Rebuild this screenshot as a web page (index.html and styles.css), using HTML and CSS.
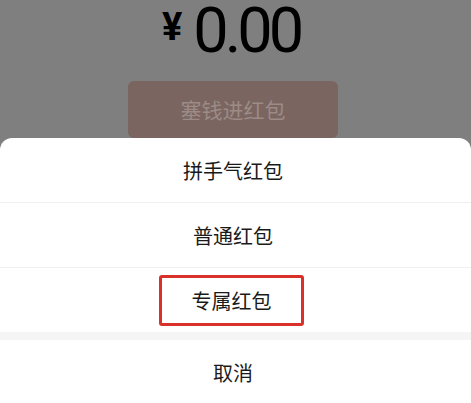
FILE: index.html
```html
<!DOCTYPE html>
<html lang="zh">
<head>
  <meta charset="UTF-8" />
  <title>发红包</title>
  <link rel="stylesheet" href="styles.css">
</head>
<body>

<div class="top">
  <div class="amount">
    <span class="yen">¥</span>
    <span class="num">0.00</span>
  </div>
  <div class="send-btn">塞钱进红包</div>
</div>

<div class="sheet">
  <div class="row">拼手气红包</div>
  <div class="row">普通红包</div>
  <div class="row"><span class="marked">专属红包</span></div>
  <div class="row cancel">取消</div>
</div>

</body>
</html>
```

FILE: styles.css
```css
html, body { margin: 0; height: 100%; }
body {
  background: #7f7f7f;
  font-family: "Noto Sans CJK SC", "Noto Sans", sans-serif;
  color: #1a1a1a;
  overflow: hidden;
}
.top { height: 138px; padding-right: 5px; display: flex; flex-direction: column; align-items: center; }
.amount { display: flex; align-items: flex-start; gap: 11px; height: 72px; color: #000; }
.yen { font-family: Roboto, sans-serif; font-size: 38px; font-weight: 700; line-height: 55px; }
.num { font-family: Roboto, sans-serif; font-size: 63px; line-height: 72px; margin-top: -5px; letter-spacing: -4px; padding-right: 4px; }
.send-btn {
  margin-top: 13px;
  width: 210px; height: 60px;
  background: #7a6560;
  border-radius: 6px;
  color: #9d8b87;
  font-size: 21px;
  line-height: 56px;
  text-align: center;
}
.sheet { background: #fff; border-radius: 12px 12px 0 0; height: 265px; }
.row {
  height: 64px;
  padding-right: 5px;
  display: flex; align-items: center; justify-content: center;
  font-size: 20px;
  border-top: 1px solid #f0f0f0;
}
.row:first-child { border-top: none; }
.cancel { border-top: 8px solid #f5f5f5; }
.marked {
  width: 145px; height: 51px;
  margin-right: 3px;
  box-sizing: border-box;
  border: 3px solid #d9302a;
  border-radius: 3px;
  display: flex; align-items: center; justify-content: center;
}
```
